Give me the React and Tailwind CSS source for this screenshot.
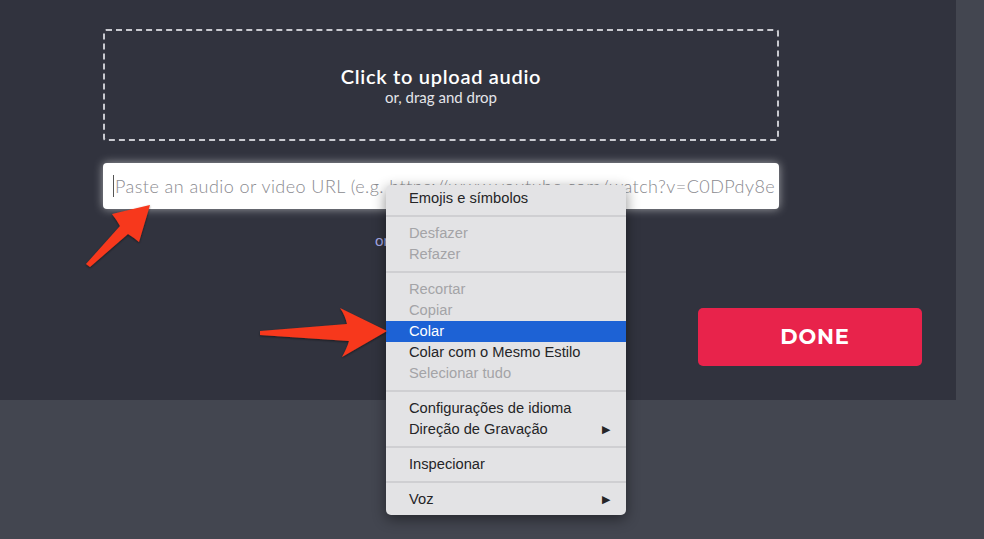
import React from "react";

const items = [
  { t: "Emojis e símbolos", sepAfter: true },
  { t: "Desfazer", dis: true },
  { t: "Refazer", dis: true, sepAfter: true },
  { t: "Recortar", dis: true },
  { t: "Copiar", dis: true },
  { t: "Colar", hi: true },
  { t: "Colar com o Mesmo Estilo" },
  { t: "Selecionar tudo", dis: true, sepAfter: true },
  { t: "Configurações de idioma" },
  { t: "Direção de Gravação", sub: true, sepAfter: true },
  { t: "Inspecionar", sepAfter: true },
  { t: "Voz", sub: true },
];

function Menu() {
  return (
    <div
      className="absolute left-[386px] top-[185px] w-[240px] rounded-[5px] bg-[#e3e3e5] pb-[5px] pt-[3px] shadow-[0_4px_14px_rgba(0,0,0,0.45)]"
      style={{ fontFamily: '"Liberation Sans", Arial, sans-serif' }}
    >
      {items.map((it, i) => (
        <React.Fragment key={i}>
          <div
            className={
              "flex h-[21px] items-center justify-between pl-[23px] pr-[16px] text-[14.7px] " +
              (it.hi
                ? "bg-[#1d62d5] text-white"
                : it.dis
                ? "text-[#a4a4a7]"
                : "text-[#252527]")
            }
          >
            <span>{it.t}</span>
            {it.sub && <span className="text-[11px] text-[#252527]">▶</span>}
          </div>
          {it.sepAfter && <div className="my-[6px] h-[2px] bg-[#cfcfd2]" />}
        </React.Fragment>
      ))}
    </div>
  );
}

export default function App() {
  return (
    <div className="relative flex h-[539px] w-[984px] overflow-hidden bg-[#434650]">
      <div className="flex h-[400px] w-[956px] flex-col bg-[#31333e] pl-[103px] pt-[29px]">
        <div className="flex h-[112px] w-[676px] flex-col items-center justify-center rounded-[3px] border-2 border-dashed border-[#c9cad0]">
          <div
            className="text-[20px] font-semibold leading-[24px] tracking-[0.7px] text-white"
            style={{ fontFamily: 'Lato, "Open Sans", sans-serif' }}
          >
            Click to upload audio
          </div>
          <div
            className="text-[15px] leading-[19px] text-[#e4e5ea]"
            style={{ fontFamily: 'Lato, "Open Sans", sans-serif' }}
          >
            or, drag and drop
          </div>
        </div>
        <div className="mt-[22px] flex h-[46px] w-[676px] items-center overflow-hidden rounded-[4px] bg-white pl-[10px] shadow-[0_0_10px_rgba(255,255,255,0.55)]">
          <span className="mr-[1px] h-[22px] w-[1px] bg-[#555]" />
          <span
            className="whitespace-nowrap text-[18px] font-light tracking-[0.45px] text-[#8a8a8f]"
            style={{ fontFamily: 'Lato, "Open Sans", sans-serif' }}
          >
            Paste an audio or video URL (e.g. https://www.youtube.com/watch?v=C0DPdy8e
          </span>
        </div>
        <div className="flex">
          <div
            className="ml-[272px] mt-[20px] text-[15px] text-[#a9abe6]"
            style={{ fontFamily: 'Lato, "Open Sans", sans-serif' }}
          >
            or use a sample
          </div>
          <button
            className="ml-auto mr-[34px] mt-[99px] flex h-[58px] w-[224px] items-center justify-center rounded-[5px] bg-[#e8234b] pl-[10px] text-[21px] font-bold tracking-[0.8px] text-white"
            style={{ fontFamily: 'Montserrat, "Open Sans", Lato, sans-serif' }}
          >
            DONE
          </button>
        </div>
      </div>
      <div className="flex-1 bg-[#434650]" />

      <Menu />

      <svg
        className="pointer-events-none absolute left-0 top-0"
        width="984"
        height="539"
        viewBox="0 0 984 539"
      >
        <defs>
          <filter id="sh" x="-20%" y="-20%" width="140%" height="140%">
            <feDropShadow dx="0" dy="1" stdDeviation="1" floodColor="#000" floodOpacity="0.5" />
          </filter>
        </defs>
        <path
          d="M86 264 L120 226 Q116 219 112 214 L150 205 L139 242 Q133 237 128 234 L90 267 Z"
          fill="#f7391c"
          filter="url(#sh)"
        />
        <path
          d="M260 331 L347 324 Q345 315 340 308 L387 331 L342 357 Q347 348 349 341 L260 335 Z"
          fill="#f7391c"
          filter="url(#sh)"
        />
      </svg>
    </div>
  );
}
